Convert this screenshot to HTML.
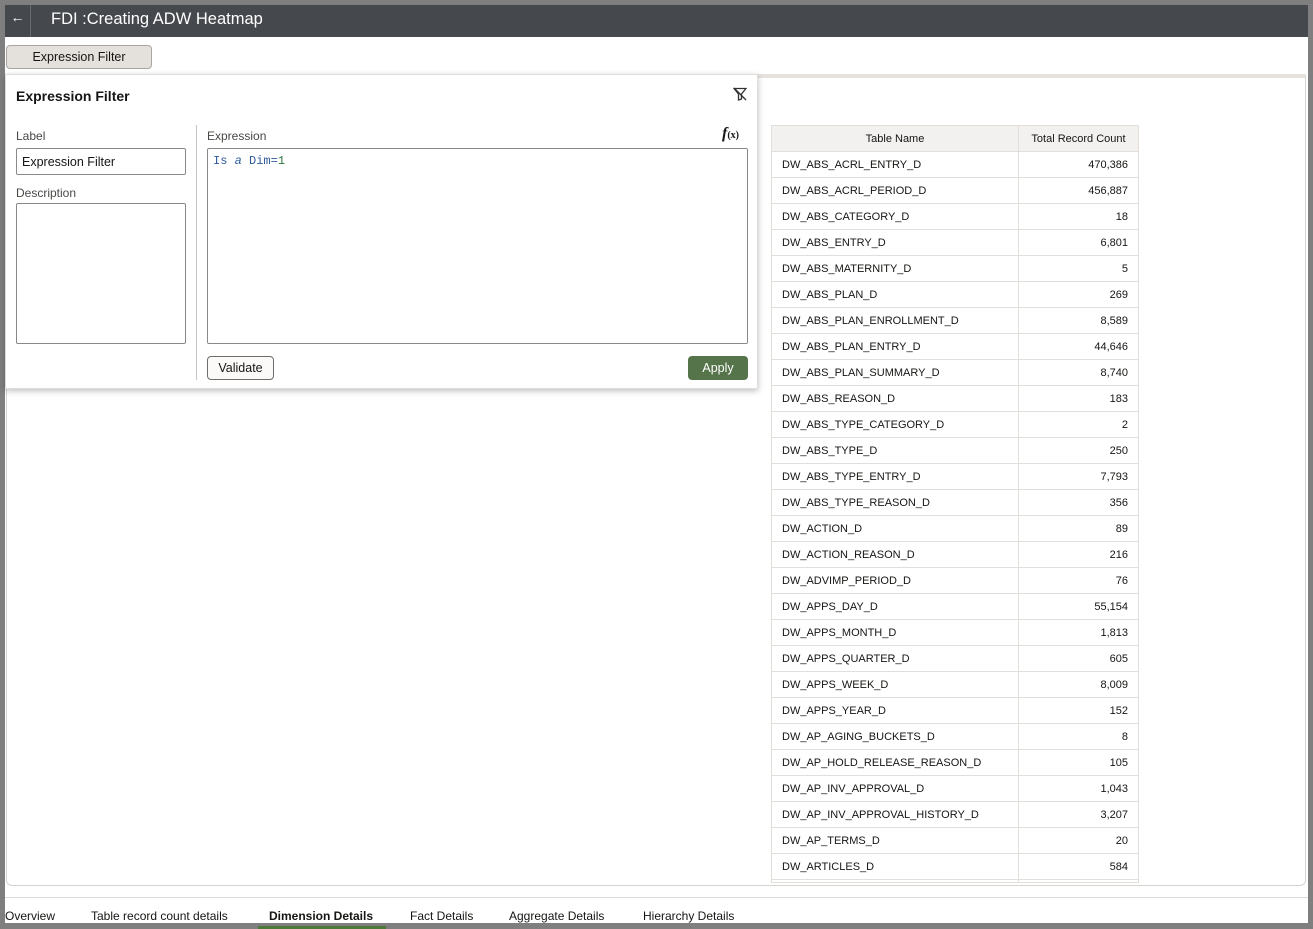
<!DOCTYPE html>
<html><head><meta charset="utf-8"><style>
*{box-sizing:border-box;margin:0;padding:0}
body{width:1313px;height:929px;background:#7f7f7f;font-family:"Liberation Sans",sans-serif;color:#161513;position:relative;overflow:hidden;font-size:12px}
.page{position:absolute;left:5px;top:5px;width:1303px;height:918px;background:#fff}
.hdr{position:absolute;left:0;top:0;width:1303px;height:32px;background:#45484c;color:#fff}
.hdr .back{position:absolute;left:0;top:0;width:26px;height:32px;border-right:1px solid #6a6d70;font-size:14px;line-height:24px;text-align:center}
.hdr .t{position:absolute;left:46px;top:5px;font-size:16.5px}
.btn{position:absolute;left:1px;top:40px;width:146px;height:24px;background:#e4e1dd;border:1px solid #a9a6a2;border-radius:4px;font-size:12.5px;text-align:center;line-height:22px}
.panel{position:absolute;left:1px;top:69px;width:1300px;height:812px;border:1px solid #d6d3cf;border-radius:0 0 6px 6px;border-top:4px solid #e6e3df}
.pop{position:absolute;left:0;top:69px;width:753px;height:315px;background:#fff;box-shadow:0 2px 6px rgba(0,0,0,.25);border:1px solid #e0ddd9}
.pop h2{position:absolute;left:10px;top:13px;font-size:14px;font-weight:bold}
.lbl{position:absolute;font-size:12px;color:#4a4845}
.inp{position:absolute;border:1px solid #8b8985;border-radius:2px;background:#fff}
.vline{position:absolute;left:190px;top:50px;width:1px;height:255px;background:#c8c5c1}
table{position:absolute;left:766px;top:120px;border-collapse:collapse;font-size:11px}
td,th{border:1px solid #e2dfdb;height:26px;padding:0 10px}
th{background:#f2f1ef;font-weight:normal}
td.n{text-align:right}
.tabs{position:absolute;left:0;top:892px;width:1303px;border-top:1px solid #dcd9d5;height:26px;font-size:12px}
.tabs span{position:absolute;top:11px}
</style></head><body>
<div class="page">
<div class="hdr"><div class="back">←</div><div class="t">FDI :Creating ADW Heatmap</div></div>
<div class="btn">Expression Filter</div>
<div class="panel"></div>
<table>
<tr><th style="width:247px">Table Name</th><th style="width:120px">Total Record Count</th></tr>
<tr><td>DW_ABS_ACRL_ENTRY_D</td><td class="n">470,386</td></tr>
<tr><td>DW_ABS_ACRL_PERIOD_D</td><td class="n">456,887</td></tr>
<tr><td>DW_ABS_CATEGORY_D</td><td class="n">18</td></tr>
<tr><td>DW_ABS_ENTRY_D</td><td class="n">6,801</td></tr>
<tr><td>DW_ABS_MATERNITY_D</td><td class="n">5</td></tr>
<tr><td>DW_ABS_PLAN_D</td><td class="n">269</td></tr>
<tr><td>DW_ABS_PLAN_ENROLLMENT_D</td><td class="n">8,589</td></tr>
<tr><td>DW_ABS_PLAN_ENTRY_D</td><td class="n">44,646</td></tr>
<tr><td>DW_ABS_PLAN_SUMMARY_D</td><td class="n">8,740</td></tr>
<tr><td>DW_ABS_REASON_D</td><td class="n">183</td></tr>
<tr><td>DW_ABS_TYPE_CATEGORY_D</td><td class="n">2</td></tr>
<tr><td>DW_ABS_TYPE_D</td><td class="n">250</td></tr>
<tr><td>DW_ABS_TYPE_ENTRY_D</td><td class="n">7,793</td></tr>
<tr><td>DW_ABS_TYPE_REASON_D</td><td class="n">356</td></tr>
<tr><td>DW_ACTION_D</td><td class="n">89</td></tr>
<tr><td>DW_ACTION_REASON_D</td><td class="n">216</td></tr>
<tr><td>DW_ADVIMP_PERIOD_D</td><td class="n">76</td></tr>
<tr><td>DW_APPS_DAY_D</td><td class="n">55,154</td></tr>
<tr><td>DW_APPS_MONTH_D</td><td class="n">1,813</td></tr>
<tr><td>DW_APPS_QUARTER_D</td><td class="n">605</td></tr>
<tr><td>DW_APPS_WEEK_D</td><td class="n">8,009</td></tr>
<tr><td>DW_APPS_YEAR_D</td><td class="n">152</td></tr>
<tr><td>DW_AP_AGING_BUCKETS_D</td><td class="n">8</td></tr>
<tr><td>DW_AP_HOLD_RELEASE_REASON_D</td><td class="n">105</td></tr>
<tr><td>DW_AP_INV_APPROVAL_D</td><td class="n">1,043</td></tr>
<tr><td>DW_AP_INV_APPROVAL_HISTORY_D</td><td class="n">3,207</td></tr>
<tr><td>DW_AP_TERMS_D</td><td class="n">20</td></tr>
<tr><td>DW_ARTICLES_D</td><td class="n">584</td></tr>
<tr><td style="height:3px;padding:0"></td><td style="height:3px;padding:0"></td></tr>
</table>
<div class="pop">
<h2>Expression Filter</h2>
<svg style="position:absolute;left:727px;top:12px" width="14" height="14" viewBox="0 0 14 14"><path d="M1 1.5h12L8.5 7v5L5.5 13V7z" fill="none" stroke="#333" stroke-width="1.3"/><path d="M1 1L13 13" stroke="#333" stroke-width="1.3"/></svg>
<div class="lbl" style="left:10px;top:54px">Label</div>
<div class="inp" style="left:10px;top:73px;width:170px;height:27px;font-size:12.5px;padding:6px 5px;color:#161513">Expression Filter</div>
<div class="lbl" style="left:10px;top:111px">Description</div>
<div class="inp" style="left:10px;top:128px;width:170px;height:141px"></div>
<div class="vline"></div>
<div class="lbl" style="left:201px;top:54px">Expression</div>
<div style="position:absolute;left:716px;top:50px;font-family:'Liberation Serif',serif;font-style:italic;font-weight:bold;font-size:16px">f<span style="font-size:10px;font-style:normal">(x)</span></div>
<div class="inp" style="left:201px;top:73px;width:541px;height:196px;font-family:'Liberation Mono',monospace;font-size:12px;padding:5px 5px;color:#2e5a9c">Is <i>a</i> Dim=<span style="color:#2a7a45">1</span></div>
<div style="position:absolute;left:201px;top:281px;width:67px;height:24px;border:1px solid #6f6d69;border-radius:4px;background:#fbfaf9;text-align:center;line-height:22px;font-size:12.5px">Validate</div>
<div style="position:absolute;left:682px;top:281px;width:60px;height:24px;border-radius:4px;background:#55744a;color:#fff;text-align:center;line-height:24px;font-size:12.5px">Apply</div>
</div>
<div class="tabs">
<span style="left:0">Overview</span>
<span style="left:86px">Table record count details</span>
<span style="left:264px;font-weight:bold">Dimension Details</span>
<span style="left:405px">Fact Details</span>
<span style="left:504px">Aggregate Details</span>
<span style="left:638px">Hierarchy Details</span>
</div>
</div>
<div style="position:absolute;left:258px;top:926px;width:128px;height:3px;background:#4d7a3c"></div>
</body></html>
